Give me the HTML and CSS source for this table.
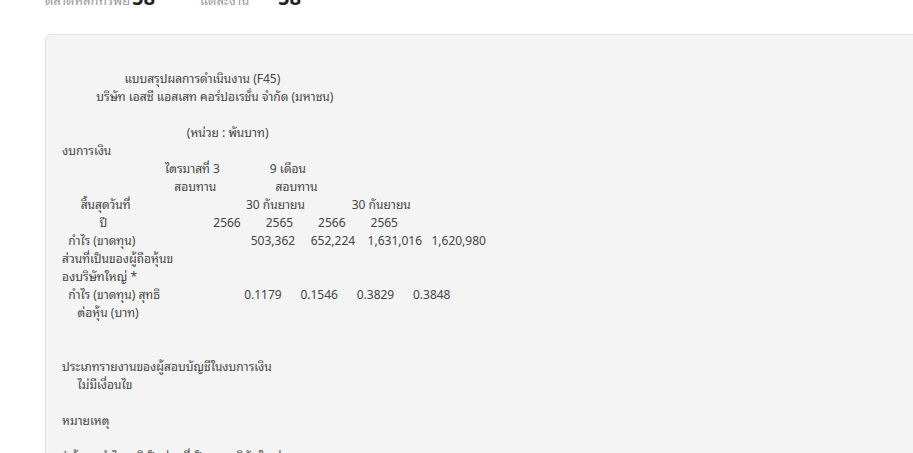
FILE: index.html
```html
<!DOCTYPE html>
<html lang="th">
<head>
    <meta charset="UTF-8">
    <title>แบบสรุปผลการดำเนินงาน (F45)</title>
    <link rel="stylesheet" href="styles.css">
</head>
<body>
<div class="page">
    <div class="stats">
        <span class="stat-label">ตลาดหลักทรัพย์</span><span class="stat-value">58</span>
        <span class="stat-label label-wide">แต่ละงาน</span><span class="stat-value">58</span>
    </div>
    <div class="news-box">
<pre class="news-text">

                    แบบสรุปผลการดำเนินงาน (F45)
           บริษัท เอสซี แอสเสท คอร์ปอเรชั่น จำกัด (มหาชน)

                                        (หน่วย : พันบาท)
งบการเงิน
                                 ไตรมาสที่ 3                9 เดือน
                                    สอบทาน                   สอบทาน
      สิ้นสุดวันที่                                     30 กันยายน               30 กันยายน
            ปี                                  2566        2565        2566        2565
  กำไร (ขาดทุน)                                     503,362     652,224    1,631,016   1,620,980
ส่วนที่เป็นของผู้ถือหุ้นข
องบริษัทใหญ่ *
  กำไร (ขาดทุน) สุทธิ                           0.1179      0.1546      0.3829      0.3848
     ต่อหุ้น (บาท)


ประเภทรายงานของผู้สอบบัญชีในงบการเงิน
     ไม่มีเงื่อนไข

หมายเหตุ

* ข้อมูลกำไรสุทธิเป็นส่วนที่เป็นของบริษัทใหญ่
</pre>
    </div>
</div>
</body>
</html>
```

FILE: styles.css
```css
html, body{
    margin: 0;
    padding: 0;
    background: #ffffff;
    overflow: hidden;
}
.page{
    padding-left: 45px;
    font-family: "Noto Sans Thai Looped", "Noto Sans", sans-serif;
    color: #333333;
}
.stats{
    display: flex;
    align-items: baseline;
    height: 20px;
    line-height: 20px;
    margin-top: -14px;
    margin-bottom: 28px;
}
.stat-label{
    font-size: 13px;
    color: #9a9a9a;
    width: 87px;
}
.label-wide{
    width: 78px;
}
.stat-value{
    font-size: 20px;
    font-weight: 700;
    color: #222222;
    width: 68px;
}
.news-box{
    width: 980px;
    background: #f4f4f4;
    border: 1px solid #e2e2e2;
    border-radius: 6px;
    box-shadow: 0 1px 2px rgba(0, 0, 0, 0.06);
    padding: 16px;
}
.news-text{
    margin: 0;
    font-family: "Noto Sans Thai Looped", "Noto Sans", sans-serif;
    font-size: 12px;
    line-height: 18px;
    color: #444444;
    white-space: pre;
}
```
